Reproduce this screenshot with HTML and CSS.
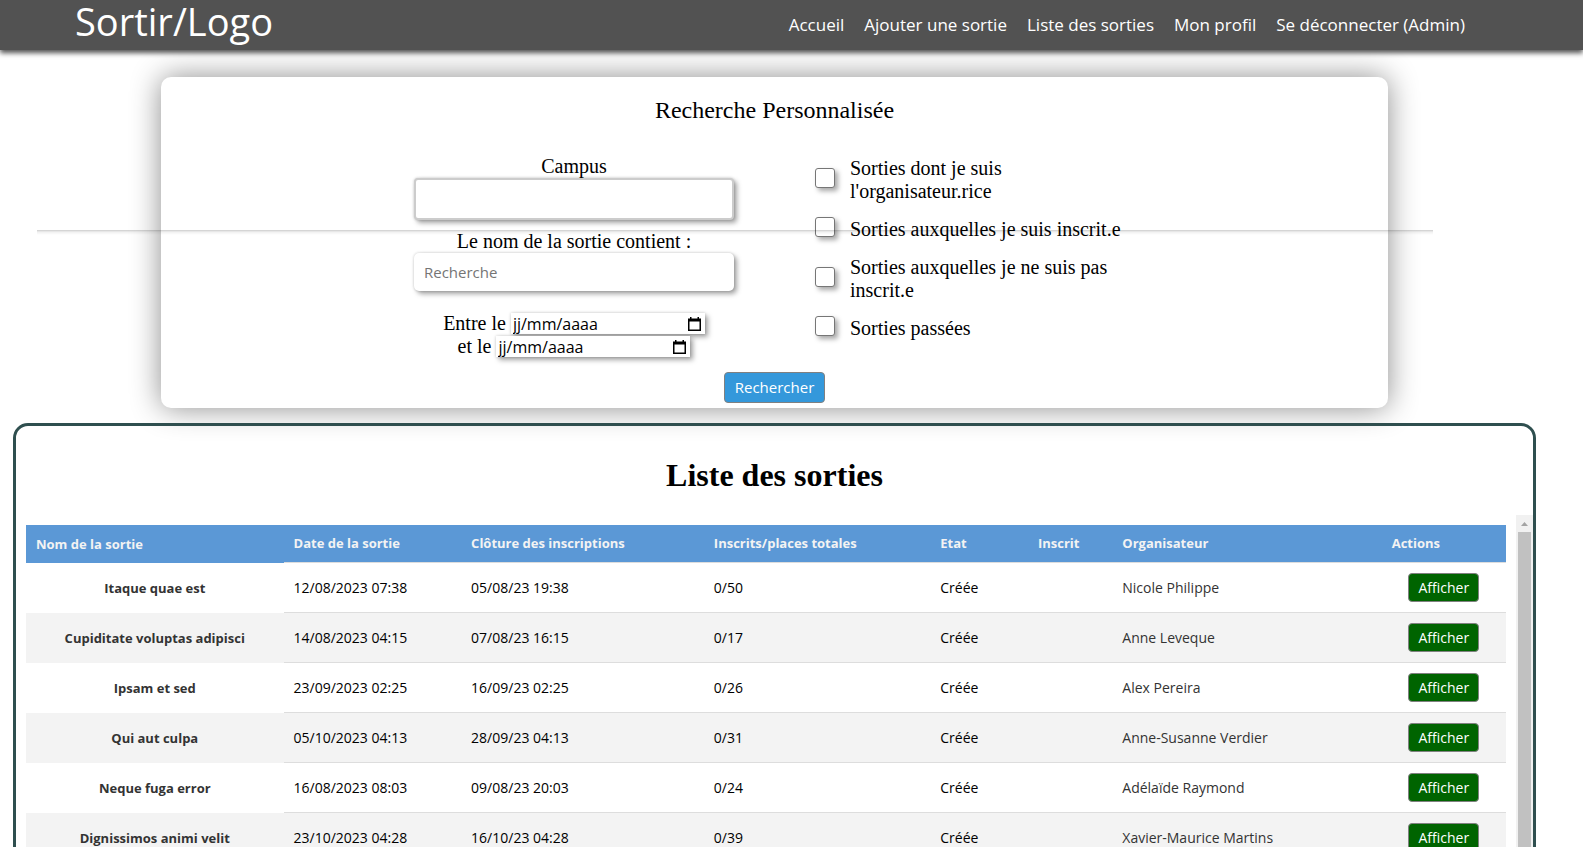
FILE: index.html
```
<!DOCTYPE html>
<html lang="fr">
<head>
<meta charset="utf-8">
<title>Liste des sorties</title>
<link rel="stylesheet" href="styles.css">
</head>
<body>
<header class="topbar">
  <a class="logo" href="#">Sortir/Logo</a>
  <nav class="nav">
    <a href="#">Accueil</a>
    <a href="#">Ajouter une sortie</a>
    <a href="#">Liste des sorties</a>
    <a href="#">Mon profil</a>
    <a href="#">Se déconnecter (Admin)</a>
  </nav>
</header>
<div class="divider"></div>
<main class="page">
  <form class="search">
    <h2 class="search-title">Recherche Personnalisée</h2>
    <div class="search-grid">
      <div class="fields">
        <label for="campus">Campus</label>
        <select id="campus" class="field field-select"><option></option></select>
        <label for="nom">Le nom de la sortie contient :</label>
        <input id="nom" class="field field-text" type="text" placeholder="Recherche">
        <div class="dates">
          <div class="date-row">
            <label for="debut">Entre le</label>
            <span class="date"><input id="debut" type="text" placeholder="jj/mm/aaaa"><svg class="cal" viewBox="0 0 13 14"><path d="M2 0h1.500v1.500h6V0H11v1.500h2V14H0V1.500h2zM1.500 4.500v8h10v-8z" fill-rule="evenodd"/></svg></span>
          </div>
          <div class="date-row">
            <label for="fin">et le</label>
            <span class="date"><input id="fin" type="text" placeholder="jj/mm/aaaa"><svg class="cal" viewBox="0 0 13 14"><path d="M2 0h1.500v1.500h6V0H11v1.500h2V14H0V1.500h2zM1.500 4.500v8h10v-8z" fill-rule="evenodd"/></svg></span>
          </div>
        </div>
      </div>
      <div class="checks">
        <label class="check"><input type="checkbox"><span>Sorties dont je suis l'organisateur.rice</span></label>
        <label class="check"><input type="checkbox"><span>Sorties auxquelles je suis inscrit.e</span></label>
        <label class="check"><input type="checkbox"><span>Sorties auxquelles je ne suis pas inscrit.e</span></label>
        <label class="check"><input type="checkbox"><span>Sorties passées</span></label>
      </div>
    </div>
    <button class="btn btn-search" type="submit">Rechercher</button>
  </form>

  <section class="list">
    <h1 class="list-title">Liste des sorties</h1>
    <div class="list-body">
      <div class="table-wrap">
        <table class="table">
          <colgroup><col class="c-nom"><col class="c-date"><col class="c-cloture"><col class="c-places"><col class="c-etat"><col class="c-inscrit"><col class="c-orga"><col class="c-actions"></colgroup>
          <thead>
            <tr><th>Nom de la sortie</th><th>Date de la sortie</th><th>Clôture des inscriptions</th><th>Inscrits/places totales</th><th>Etat</th><th>Inscrit</th><th>Organisateur</th><th>Actions</th></tr>
          </thead>
          <tbody>
            <tr><th scope="row">Itaque quae est</th><td>12/08/2023 07:38</td><td>05/08/23 19:38</td><td>0/50</td><td>Créée</td><td></td><td class="orga">Nicole Philippe</td><td class="act"><button class="btn btn-show" type="button">Afficher</button></td></tr>
            <tr><th scope="row">Cupiditate voluptas adipisci</th><td>14/08/2023 04:15</td><td>07/08/23 16:15</td><td>0/17</td><td>Créée</td><td></td><td class="orga">Anne Leveque</td><td class="act"><button class="btn btn-show" type="button">Afficher</button></td></tr>
            <tr><th scope="row">Ipsam et sed</th><td>23/09/2023 02:25</td><td>16/09/23 02:25</td><td>0/26</td><td>Créée</td><td></td><td class="orga">Alex Pereira</td><td class="act"><button class="btn btn-show" type="button">Afficher</button></td></tr>
            <tr><th scope="row">Qui aut culpa</th><td>05/10/2023 04:13</td><td>28/09/23 04:13</td><td>0/31</td><td>Créée</td><td></td><td class="orga">Anne-Susanne Verdier</td><td class="act"><button class="btn btn-show" type="button">Afficher</button></td></tr>
            <tr><th scope="row">Neque fuga error</th><td>16/08/2023 08:03</td><td>09/08/23 20:03</td><td>0/24</td><td>Créée</td><td></td><td class="orga">Adélaïde Raymond</td><td class="act"><button class="btn btn-show" type="button">Afficher</button></td></tr>
            <tr><th scope="row">Dignissimos animi velit</th><td>23/10/2023 04:28</td><td>16/10/23 04:28</td><td>0/39</td><td>Créée</td><td></td><td class="orga">Xavier-Maurice Martins</td><td class="act"><button class="btn btn-show" type="button">Afficher</button></td></tr>
          </tbody>
        </table>
      </div>
      <div class="scrollbar" aria-hidden="true">
        <svg class="scroll-arrow" viewBox="0 0 17 17"><path d="M5 11l3.500-4L12 11z"/></svg>
        <div class="scroll-thumb"></div>
      </div>
    </div>
  </section>
</main>
</body>
</html>
```

FILE: styles.css
```
* { box-sizing: border-box; }

body {
  margin: 0;
  height: 100vh;
  overflow: hidden;
  background: #fff;
  color: #000;
  font-family: "Liberation Serif", "Times New Roman", serif;
  font-size: 20px;
  line-height: 23px;
}

.topbar {
  position: relative;
  z-index: 2;
  display: flex;
  justify-content: space-between;
  align-items: center;
  height: 50px;
  padding: 0 118px 0 75px;
  background: #525252;
  box-shadow: 0 3px 5px #525252;
  font-family: "Open Sans", "Noto Sans", sans-serif;
}
.topbar a { color: #fff; text-decoration: none; }
.logo { font-size: 38px; line-height: 40px; padding-bottom: 8px; }
.nav { display: flex; gap: 20px; padding-bottom: 2px; font-size: 17px; }

/* Soft rule that runs over the search panel */
.divider {
  position: absolute;
  z-index: 3;
  top: 230px;
  left: 37px;
  right: 150px;
  height: 5px;
  background: linear-gradient(rgba(0, 0, 0, .2), rgba(0, 0, 0, .06) 40%, transparent);
}

.page { padding-right: 34px; }

.search {
  margin: 27px 161px 15px;
  padding: 20px 20px 5px;
  border-radius: 10px;
  background: #fff;
  box-shadow: 0 0 30px rgba(0, 0, 0, .45);
  text-align: center;
}
.search-title { margin: 0; font-size: 24px; line-height: 27px; font-weight: 400; }
.search-grid {
  display: grid;
  grid-template-columns: 320px 320px;
  justify-content: center;
  gap: 81px;
  padding: 31px 0 14px;
}
.fields { display: flex; flex-direction: column; }
.field {
  width: 100%;
  padding: 0 10px;
  background: #fff;
  box-shadow: 3px 3px 5px rgba(0, 0, 0, .35), 0 0 3px rgba(0, 0, 0, .2);
  font: 15px/20px "Open Sans", "Noto Sans", sans-serif;
}
.field-select { appearance: none; height: 42px; margin-bottom: 10px; border: 2px solid #ccc; border-radius: 4px; }
.field-text { height: 38px; border: 0; border-radius: 5px; }
.field-text::placeholder { color: #757575; }

.dates { padding-top: 21px; }
.date-row { display: flex; justify-content: center; align-items: center; gap: 5px; height: 23px; }
.date {
  display: flex;
  align-items: center;
  width: 194px;
  height: 21px;
  padding: 0 4px 0 2px;
  background: #fff;
  box-shadow: 3px 3px 5px rgba(0, 0, 0, .35), 0 0 3px rgba(0, 0, 0, .2);
}
.date input {
  flex: 1;
  min-width: 0;
  padding: 0;
  border: 0;
  background: none;
  font: 16px/20px "Open Sans", "Noto Sans", sans-serif;
}
.date input::placeholder { color: #000; }
.cal { width: 13px; height: 14px; }

.checks { display: flex; flex-direction: column; gap: 14px; padding-top: 2px; text-align: left; }
.check { display: flex; align-items: center; gap: 15px; }
.check input {
  appearance: none;
  flex: none;
  width: 20px;
  height: 20px;
  margin: 0 0 5px;
  border: 1px solid #767676;
  border-radius: 3px;
  background: #fff;
  box-shadow: 3px 3px 5px rgba(0, 0, 0, .35);
}

.btn {
  border: 1px solid #808080;
  border-radius: 4px;
  color: #fff;
  font-family: "Open Sans", "Noto Sans", sans-serif;
}
.btn-search { display: block; margin: 0 auto; padding: 4px 10px; background: #3498db; font-size: 15px; line-height: 21px; }
.btn-show { display: block; margin: 0 auto; padding: 4px 9px; background: #006400; font-size: 14px; line-height: 19px; }

.list { margin: 0 13px; border: 3px solid #2f4f4f; border-radius: 15px; }
.list-title { margin: 0; padding: 31px 0 21px; font-size: 32px; line-height: 37px; text-align: center; }
.list-body { display: flex; }
.table-wrap { flex: 1; padding: 10px; }
.table {
  width: 100%;
  table-layout: fixed;
  border-collapse: separate;
  border-spacing: 0;
  font: 14px/19px "Open Sans", "Noto Sans", sans-serif;
}
.c-nom { width: 17.4%; }
.c-date { width: 12%; }
.c-cloture { width: 16.4%; }
.c-places { width: 15.3%; }
.c-etat { width: 6.6%; }
.c-inscrit { width: 5.7%; }
.c-orga { width: 18.2%; }
.c-actions { width: 8.4%; }
.table th, .table td { padding: 10px; border-bottom: 1px solid #ddd; text-align: left; white-space: nowrap; }
.table th:first-child { border-bottom: 0; }
.table thead th { padding: 9px 10px; background: #5b98d6; color: #f3f3f3; font-weight: 700; font-size: 13px; }
.table tbody th { text-align: center; color: #333; font-weight: 700; font-size: 13px; }
.table tbody tr:nth-child(even) { background: #f3f3f3; }
.table .orga { color: #333; }

.scrollbar { width: 17px; background: #f1f1f1; display: flex; flex-direction: column; align-items: center; }
.scroll-arrow { width: 17px; height: 17px; fill: #a3a3a3; }
.scroll-thumb { flex: 1; width: 13px; background: #c1c1c1; }
```
